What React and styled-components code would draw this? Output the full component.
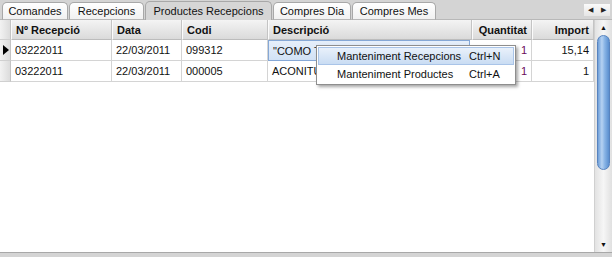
import React from "react";
import styled, { createGlobalStyle } from "styled-components";

const Global = createGlobalStyle`
  html, body { margin: 0; padding: 0; background: #fff; }
  body { font-family: "Liberation Sans", Arial, sans-serif; font-size: 11px; color: #111; }
`;

const Frame = styled.div`
  position: relative;
  width: 612px;
  height: 257px;
  display: flex;
  flex-direction: column;
  overflow: hidden;
  background: #fff;
`;

const TabStrip = styled.div`
  height: 20px;
  background: #d4d4d4;
  display: flex;
  align-items: flex-end;
  padding-left: 2px;
  border-bottom: 1px solid #b8b8b8;
  box-sizing: border-box;
`;

const Tab = styled.div`
  width: ${(p) => p.w}px;
  height: ${(p) => (p.active ? "19px" : "18px")};
  margin-bottom: -1px;
  margin-right: 1px;
  display: flex;
  align-items: center;
  justify-content: center;
  box-sizing: border-box;
  border: 1px solid #a8a8a8;
  border-bottom: ${(p) => (p.active ? "none" : "1px solid #b8b8b8")};
  border-radius: 5px 5px 0 0;
  background: ${(p) =>
    p.active ? "#d6d6d6" : "linear-gradient(#ffffff, #f1f1f1)"};
  color: #111;
  white-space: nowrap;
`;

const TabArrows = styled.div`
  margin-left: auto;
  margin-right: 2px;
  align-self: center;
  width: 26px;
  height: 12px;
  background: linear-gradient(#fafafa, #e6e6e6);
  display: flex;
  align-items: center;
  justify-content: space-around;
  font-size: 7px;
  color: #222;
`;

const Body = styled.div`
  flex: 1;
  display: flex;
  min-height: 0;
`;

const Grid = styled.div`
  width: 594px;
  display: flex;
  flex-direction: column;
`;

const Row = styled.div`
  display: grid;
  grid-template-columns: 11px 101px 70px 86px 204px 60px 62px;
  height: ${(p) => p.h}px;
`;

const HeadCell = styled.div`
  box-sizing: border-box;
  background: linear-gradient(#f4f4f4, #dadada);
  border-right: 1px solid #c4c4c4;
  border-bottom: 1px solid #bcbcbc;
  border-left: 1px solid #fbfbfb;
  font-weight: bold;
  display: flex;
  align-items: center;
  justify-content: ${(p) => (p.right ? "flex-end" : "flex-start")};
  padding: 0 4px;
  white-space: nowrap;
`;

const Indicator = styled.div`
  box-sizing: border-box;
  background: linear-gradient(90deg, #f2f2f2, #dcdcdc);
  border-right: 1px solid #c4c4c4;
  border-bottom: 1px solid #d0d0d0;
  display: flex;
  align-items: center;
  justify-content: center;
`;

const Arrow = styled.span`
  width: 0;
  height: 0;
  border-top: 5px solid transparent;
  border-bottom: 5px solid transparent;
  border-left: 6px solid #000;
  margin-left: 2px;
`;

const Cell = styled.div`
  box-sizing: border-box;
  border-right: 1px solid #d4d4d4;
  border-bottom: 1px solid #d4d4d4;
  display: flex;
  align-items: center;
  justify-content: ${(p) => (p.right ? "flex-end" : "flex-start")};
  padding: 0 4px;
  white-space: nowrap;
  overflow: hidden;
  color: ${(p) => p.color || "#111"};
  background: ${(p) => (p.focus ? "linear-gradient(#e6effa, #d2e2f6)" : "#fff")};
  ${(p) => p.focus && "border: 1px solid #86a8d6; margin-right: 2px;"}
`;

const ScrollBar = styled.div`
  width: 18px;
  display: flex;
  flex-direction: column;
  align-items: center;
  background: linear-gradient(90deg, #e2e2e2, #f6f6f6 50%, #e0e0e0);
  border-left: 1px solid #d0d0d0;
  box-sizing: border-box;
  padding-bottom: 1px;
`;

const ScrollBtn = styled.div`
  width: 16px;
  height: 14px;
  display: flex;
  align-items: center;
  justify-content: center;
  font-size: 7px;
  color: #111;
`;

const Thumb = styled.div`
  width: 13px;
  height: 135px;
  margin-top: 1px;
  border-radius: 7px;
  background: linear-gradient(90deg, #6f9fd8, #b6d2f2 35%, #8ab5e6 60%, #5b8fcf);
  border: 1px solid #5783bf;
  box-sizing: border-box;
`;

const Spacer = styled.div`
  flex: 1;
`;

const Footer = styled.div`
  height: 4px;
  background: #d4d4d4;
  border-top: 1px solid #a8a8a8;
`;

const Menu = styled.div`
  position: absolute;
  left: 316px;
  top: 45px;
  width: 200px;
  padding: 1px;
  background: #fff;
  border: 1px solid #8e8e8e;
  box-shadow: 2px 2px 3px rgba(0, 0, 0, 0.35);
  box-sizing: border-box;
`;

const MenuItem = styled.div`
  height: 18px;
  display: flex;
  align-items: center;
  padding-left: 18px;
  box-sizing: border-box;
  white-space: nowrap;
  background: ${(p) => (p.hot ? "linear-gradient(#e9f1fb, #c9dcf3)" : "transparent")};
  border: 1px solid ${(p) => (p.hot ? "#a9c4e8" : "transparent")};
  color: #111;
`;

const Label = styled.span`
  flex: 0 0 132px;
`;

const rows = [
  { rec: "03222011", data: "22/03/2011", codi: "099312", desc: "\"COMO TE SIENTES\"", q: "1", imp: "15,14", cur: true },
  { rec: "03222011", data: "22/03/2011", codi: "000005", desc: "ACONITUM NAPELLUS", q: "1", imp: "1" },
];

export default function App() {
  return (
    <>
      <Global />
      <Frame>
        <TabStrip>
          <Tab w={66}>Comandes</Tab>
          <Tab w={75}>Recepcions</Tab>
          <Tab active w={127}>Productes Recepcions</Tab>
          <Tab w={78}>Compres Dia</Tab>
          <Tab w={84}>Compres Mes</Tab>
          <TabArrows>
            <span>◀</span>
            <span>▶</span>
          </TabArrows>
        </TabStrip>
        <Body>
          <Grid>
            <Row h={20}>
              <Indicator />
              <HeadCell>Nº Recepció</HeadCell>
              <HeadCell>Data</HeadCell>
              <HeadCell>Codi</HeadCell>
              <HeadCell>Descripció</HeadCell>
              <HeadCell right>Quantitat</HeadCell>
              <HeadCell right>Import</HeadCell>
            </Row>
            {rows.map((r, i) => (
              <Row h={21} key={i}>
                <Indicator>{r.cur && <Arrow />}</Indicator>
                <Cell>{r.rec}</Cell>
                <Cell>{r.data}</Cell>
                <Cell>{r.codi}</Cell>
                <Cell focus={r.cur}>{r.desc}</Cell>
                <Cell right color="#6a0a5a">{r.q}</Cell>
                <Cell right>{r.imp}</Cell>
              </Row>
            ))}
          </Grid>
          <ScrollBar>
            <ScrollBtn>▲</ScrollBtn>
            <Thumb />
            <Spacer />
            <ScrollBtn>▼</ScrollBtn>
          </ScrollBar>
        </Body>
        <Footer />
        <Menu>
          <MenuItem hot>
            <Label>Manteniment Recepcions</Label>
            <span>Ctrl+N</span>
          </MenuItem>
          <MenuItem>
            <Label>Manteniment Productes</Label>
            <span>Ctrl+A</span>
          </MenuItem>
        </Menu>
      </Frame>
    </>
  );
}
